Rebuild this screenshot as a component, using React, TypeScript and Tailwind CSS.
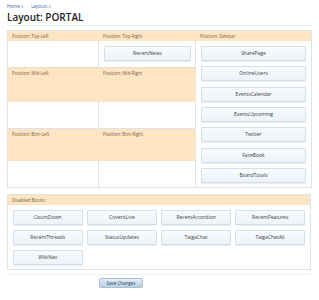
import React from "react";

const sidebar = ["SharePage", "OnlineUsers", "EventsCalendar", "EventsUpcoming", "Twitter", "FaceBook", "BoardTotals"];
const disabled = ["CountDown", "CoveritLive", "RecentAccordion", "RecentFeatures", "RecentThreads", "StatusUpdates", "TaigaChat", "TaigaChatAlt", "WikiNav"];

function Block({ name }: { name: string }) {
  return (
    <div className="h-[15px] flex items-center justify-center border border-[#d3dee8] bg-gradient-to-b from-[#f8fbfe] to-[#ecf3f9] text-[5px] text-[#3a3a3a] rounded-[1px] shadow-[0_1px_0_#e6edf3]">
      {name}
    </div>
  );
}

function Head({ label, h }: { label: string; h: string }) {
  return (
    <div className={`${h} bg-[#fde4c3] pl-[4px] pt-[3px] text-[4.5px] leading-[5px] text-[#7a5f44]`}>
      {label}
    </div>
  );
}

export default function App() {
  return (
    <div className="w-[319px] h-[300px] bg-white px-[7px] pt-[3px] leading-none" style={{ fontFamily: '"Open Sans", "Liberation Sans", sans-serif' }}>
      <div className="h-[6px] text-[4.5px] leading-[6px] text-[#3b63a3] flex gap-[8px]">
        <span>Home »</span>
        <span>Layouts »</span>
      </div>
      <div className="mt-[3px] h-[14px] border-b border-[#eceff2] text-[10px] leading-[11px] font-semibold text-[#222]">
        Layout: PORTAL
      </div>

      <div className="mt-[4px] flex border border-[#dbe3ea] w-[305px]">
        <div className="w-[188px] grid grid-cols-[91px_97px]">
          <div className="col-span-2 grid grid-cols-[91px_97px] bg-[#fde4c3]">
            <Head label="Position: Top-Left" h="h-[10px]" />
            <Head label="Position: Top-Right" h="h-[10px]" />
          </div>
          <div className="h-[26px] border-r border-[#dbe3ea]" />
          <div className="h-[26px] border-r border-[#dbe3ea] pl-[5px] pr-[4px] pt-[5px]">
            <Block name="RecentNews" />
          </div>
          <div className="col-span-2 grid grid-cols-[91px_97px] bg-[#fde4c3] border-t border-[#e8dccb]">
            <Head label="Position: Mid-Left" h="h-[34px]" />
            <Head label="Position: Mid-Right" h="h-[34px]" />
          </div>
          <div className="h-[26px] border-r border-[#dbe3ea]" />
          <div className="h-[26px] border-r border-[#dbe3ea]" />
          <div className="col-span-2 grid grid-cols-[91px_97px] bg-[#fde4c3] border-t border-[#dbe3ea]">
            <Head label="Position: Btm-Left" h="h-[32px]" />
            <Head label="Position: Btm-Right" h="h-[32px]" />
          </div>
          <div className="h-[26px] border-r border-[#dbe3ea]" />
          <div className="h-[26px] border-r border-[#dbe3ea]" />
        </div>
        <div className="flex-1 flex flex-col">
          <Head label="Position: Sidebar" h="h-[10px]" />
          <div className="flex flex-col gap-[5.33px] px-[5px] pt-[5px] pb-[4px]">
            {sidebar.map((s) => (
              <Block key={s} name={s} />
            ))}
          </div>
        </div>
      </div>

      <div className="mt-[6px] w-[304px] border border-[#dbe3ea]">
        <Head label="Disabled Blocks" h="h-[10px]" />
        <div className="grid grid-cols-4 gap-x-[4.6px] gap-y-[5px] p-[5px] pb-[4px]">
          {disabled.map((s) => (
            <Block key={s} name={s} />
          ))}
        </div>
      </div>

      <div className="mt-[4px] w-[304px] border-t border-[#eceff2] pt-[3px] pl-[92px] flex">
        <button className="w-[44px] h-[10px] rounded-[2px] bg-gradient-to-b from-[#e4edf6] to-[#b8cde1] border border-[#a9bfd4] text-[4.5px] leading-[8px] text-[#2c3e50] flex items-center justify-center">
          Save Changes
        </button>
      </div>
    </div>
  );
}
